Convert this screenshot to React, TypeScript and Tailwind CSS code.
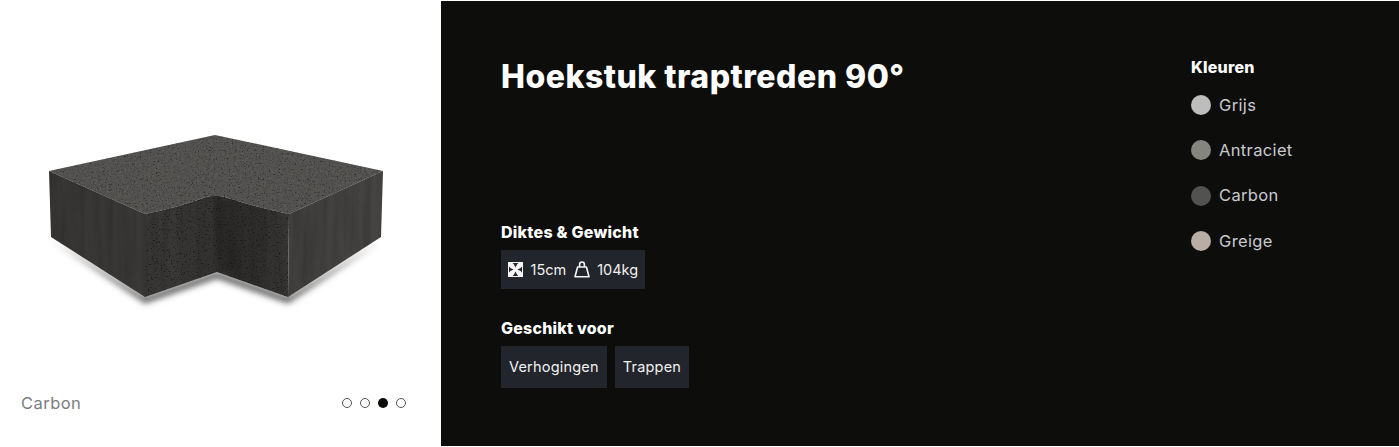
import React from "react";

const font = { fontFamily: '"Inter","Liberation Sans",sans-serif' };

function Brick() {
  return (
    <svg width="441" height="380" viewBox="0 0 441 380" className="block">
      <defs>
        <filter id="blur" x="-20%" y="-20%" width="140%" height="140%">
          <feGaussianBlur stdDeviation="3" />
        </filter>
        <filter id="soft" x="-20%" y="-20%" width="140%" height="140%">
          <feGaussianBlur stdDeviation="2.5" />
        </filter>
        <filter id="pits" x="0" y="0" width="100%" height="100%" colorInterpolationFilters="sRGB">
          <feTurbulence type="fractalNoise" baseFrequency="0.62" numOctaves="2" seed="11" />
          <feColorMatrix
            type="matrix"
            values="0 0 0 0 0.09  0 0 0 0 0.09  0 0 0 0 0.09  5 0 0 0 -3"
          />
          <feGaussianBlur stdDeviation="0.45" />
        </filter>
        <filter id="mottle" x="0" y="0" width="100%" height="100%" colorInterpolationFilters="sRGB">
          <feTurbulence type="fractalNoise" baseFrequency="0.45" numOctaves="2" seed="4" />
          <feColorMatrix
            type="matrix"
            values="0 0 0 0 0.55  0 0 0 0 0.54  0 0 0 0 0.52  1.3 0 0 0 -0.5"
          />
          <feGaussianBlur stdDeviation="0.6" />
        </filter>
        <filter id="streak" x="0" y="0" width="100%" height="100%" colorInterpolationFilters="sRGB">
          <feTurbulence type="fractalNoise" baseFrequency="0.14 0.01" numOctaves="2" seed="9" />
          <feColorMatrix
            type="matrix"
            values="0 0 0 0 0.1  0 0 0 0 0.1  0 0 0 0 0.1  1.4 0 0 0 -0.55"
          />
        </filter>
        <linearGradient id="left" x1="0" y1="0" x2="1" y2="0">
          <stop offset="0" stopColor="#363534" />
          <stop offset="1" stopColor="#3a3938" />
        </linearGradient>
        <linearGradient id="inner" x1="0" y1="0" x2="1" y2="0">
          <stop offset="0" stopColor="#3a3938" />
          <stop offset="0.42" stopColor="#353433" />
          <stop offset="0.52" stopColor="#343332" />
          <stop offset="0.64" stopColor="#2c2b2a" />
          <stop offset="1" stopColor="#373635" />
        </linearGradient>
        <linearGradient id="right" x1="0" y1="0" x2="1" y2="0">
          <stop offset="0" stopColor="#403f3e" />
          <stop offset="1" stopColor="#454443" />
        </linearGradient>
        <clipPath id="topface">
          <path d="M215 135 L383 171 L289 214 Q252 206 228 198 Q217 194 206 197 Q180 207 145 214 L49 171 Z" />
        </clipPath>
        <clipPath id="sides">
          <path d="M49 171 L145 214 Q180 207 206 197 Q217 194 228 198 Q252 206 289 214 L383 171 L381 237 L288 297 L217 272 L145 297 L51 237 Z" />
        </clipPath>
        <clipPath id="innerface">
          <path d="M145 214 Q180 207 206 197 Q217 194 228 198 Q252 206 289 214 L288 297 L217 272 L145 297 Z" />
        </clipPath>
      </defs>
      <path
        d="M52 240 L145 303 L217 278 L288 303 L378 243 L288 297 L217 272 L145 297 Z"
        fill="#4a4a4a"
        filter="url(#blur)"
      />
      <path d="M215 135 L383 171 L289 214 Q252 206 228 198 Q217 194 206 197 Q180 207 145 214 L49 171 Z" fill="#504f4d" />
      <path d="M49 171 L145 214 L145 297 L51 237 Z" fill="url(#left)" />
      <path d="M145 214 Q180 207 206 197 Q217 194 228 198 Q252 206 289 214 L288 297 L217 272 L145 297 Z" fill="url(#inner)" />
      <path d="M383 171 L289 214 L288 297 L381 237 Z" fill="url(#right)" />
      <g clipPath="url(#innerface)">
        <path d="M214 198 Q212 235 220 272 L238 266 Q226 230 228 200 Z" fill="#1c1b1a" opacity="0.4" filter="url(#soft)" />
      </g>
      <g clipPath="url(#topface)">
        <rect x="40" y="125" width="350" height="100" filter="url(#mottle)" opacity="0.4" />
        <rect x="40" y="125" width="350" height="100" filter="url(#pits)" opacity="0.55" />
      </g>
      <g clipPath="url(#sides)">
        <rect x="40" y="165" width="350" height="140" filter="url(#streak)" opacity="0.35" />
      </g>
      <g clipPath="url(#innerface)">
        <rect x="145" y="194" width="144" height="104" filter="url(#pits)" opacity="0.95" />
      </g>
    </svg>
  );
}

function ExpandIcon() {
  return (
    <svg width="15" height="15" viewBox="0 0 15 15" className="shrink-0">
      <rect width="15" height="15" fill="#f4f4f4" />
      <path d="M4.6 1 H10.4 L9 2.4 L7.5 5.5 L6 2.4 Z M4.6 14 H10.4 L9 12.6 L7.5 9.5 L6 12.6 Z M1 4.6 V10.4 L2.4 9 L5.5 7.5 L2.4 6 Z M14 4.6 V10.4 L12.6 9 L9.5 7.5 L12.6 6 Z" fill="#22252b" />
    </svg>
  );
}

function WeightIcon() {
  return (
    <svg width="16" height="17" viewBox="0 0 16 17" fill="none" stroke="#f4f4f4" strokeWidth="1.6" className="shrink-0">
      <path d="M3.6 6 H12.4 L15 15.8 H1 Z" strokeLinejoin="round" />
      <path d="M5.6 6 V3.4 Q5.6 1 8 1 Q10.4 1 10.4 3.4 V6" />
    </svg>
  );
}

function Tag({ children }: { children: React.ReactNode }) {
  return <div className="flex h-[42px] items-center bg-[#22252b] px-2 text-[14.5px] tracking-[0.2px] text-[#f1f1f1]">{children}</div>;
}

const colours = [
  ["Grijs", "#bdbdbd"],
  ["Antraciet", "#85857f"],
  ["Carbon", "#525250"],
  ["Greige", "#b9aea4"],
];

export default function App() {
  return (
    <div className="flex h-[447px] w-[1399px] overflow-hidden bg-white" style={font}>
      <div className="flex w-[441px] shrink-0 flex-col">
        <Brick />
        <div className="flex h-[46px] items-center justify-between pl-[21px] pr-[35px]">
          <span className="text-[16.5px] tracking-[0.45px] text-[#7a7d80]">Carbon</span>
          <div className="flex gap-[8px]">
            <span className="h-[10px] w-[10px] rounded-full border border-[#555]" />
            <span className="h-[10px] w-[10px] rounded-full border border-[#555]" />
            <span className="h-[10px] w-[10px] rounded-full bg-[#0d0d0c]" />
            <span className="h-[10px] w-[10px] rounded-full border border-[#555]" />
          </div>
        </div>
      </div>
      <div className="mt-px mb-px flex flex-1 bg-[#0d0d0c] pl-[60px]">
        <div className="flex-1 pt-[55px]">
          <h1 className="text-[32px] font-extrabold leading-[42px] tracking-[0.5px] text-white">Hoekstuk traptreden 90°</h1>
          <h2 className="mt-[122px] text-[16px] font-extrabold leading-[24px] tracking-[0.25px] text-white">Diktes &amp; Gewicht</h2>
          <div className="mt-[6px] flex">
            <div className="flex h-[39px] items-center gap-[7.5px] bg-[#22252b] px-[7px] text-[14.5px] text-[#f1f1f1]">
              <ExpandIcon />
              <span>15cm</span>
              <WeightIcon />
              <span>104kg</span>
            </div>
          </div>
          <h2 className="mt-[27px] text-[16px] font-extrabold leading-[24px] tracking-[0.2px] text-white">Geschikt voor</h2>
          <div className="mt-[6px] flex gap-[8px]">
            <Tag>Verhogingen</Tag>
            <Tag>Trappen</Tag>
          </div>
        </div>
        <div className="w-[208px] shrink-0 pt-[54px]">
          <h2 className="text-[16px] font-extrabold leading-[24px] tracking-[0.2px] text-white">Kleuren</h2>
          <div className="mt-[11px] flex flex-col gap-[15.3px]">
            {colours.map(([name, c]) => (
              <div key={name} className="flex h-[30px] items-center gap-[8px] text-[16.5px] tracking-[0.35px] text-[#c9c9ce]">
                <span className="h-[20px] w-[20px] rounded-full" style={{ backgroundColor: c }} />
                {name}
              </div>
            ))}
          </div>
        </div>
      </div>
    </div>
  );
}
